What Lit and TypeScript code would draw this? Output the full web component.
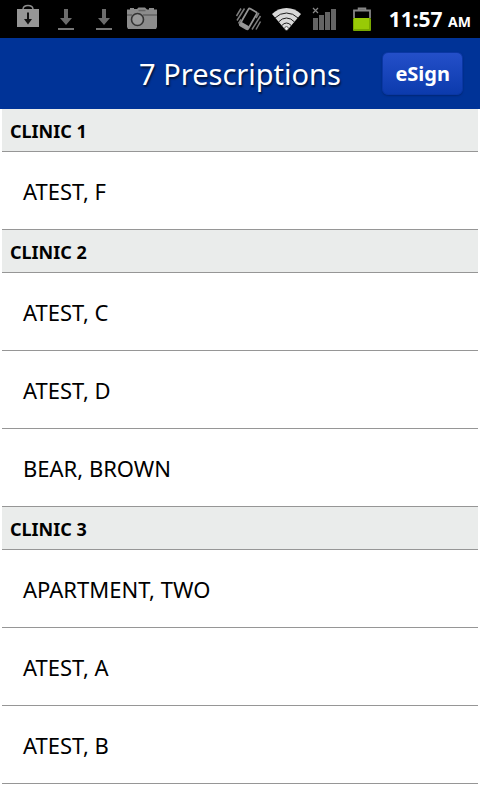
import { LitElement, html, css, svg } from "lit";
import { customElement, property } from "lit/decorators.js";

const bag = svg`
  <path d="M14 10V9Q14.500 5.500 19 5.500T24 9V10" fill="none" stroke="#8c8c8c" stroke-width="1.500"/>
  <rect x="8" y="9" width="22" height="18" fill="#969696"/>
  <path d="M19 12.500V22" stroke="#111" stroke-width="2"/>
  <path d="M15 19H23L19 24.500Z" fill="#111"/>`;

const download = svg`
  <path d="M17 9H21V18H25L19 25L13 18H17Z" fill="#6c6c6c"/>
  <rect x="11" y="28" width="16" height="2" fill="#777"/>`;

const camera = svg`
  <path d="M7 8H11V9H14L15.500 7.500H22L24 9.500H26V8H31V9.500H34V27L33 29H5L4 27V9.500H7Z" fill="#8c8c8c"/>
  <path d="M4 15H9M20 15H34" stroke="#4c4c4c" stroke-width="1"/>
  <circle cx="14.500" cy="19.500" r="6" fill="#999" stroke="#333" stroke-width="1.600"/>
  <path d="M15.500 10.500H22.500" stroke="#666" stroke-width="1.500"/>`;

const vibrate = svg`
  <g fill="none" stroke="#7c7c7c">
    <g transform="rotate(30 19 19)">
      <rect x="14.500" y="9" width="9.500" height="19.500" rx="1.500" stroke="#949494" stroke-width="1.800"/>
      <path d="M15 26.500H23.500" stroke="#999" stroke-width="3.500"/>
    </g>
    <path d="M7.500 16L12 8.500M8 20.500L15.500 8.500M9.500 23.500L12 19.500" stroke-width="1.500"/>
    <path d="M23 29.500L31.500 16M27 29.500L31.500 21.500M27 18L30 13" stroke-width="1.500"/>
  </g>`;

const wifi = svg`
  <path d="M5 14Q11 8 19.500 8T34 14L20.500 30H18.500Z" fill="#d8d8d8"/>
  <g fill="none" stroke="#1c1c1c" stroke-width="1">
    <path d="M8 18Q13 13 19.500 13T31 18"/>
    <path d="M11.500 22Q15 18 19.500 18T27.500 22"/>
    <path d="M14.800 25.500Q17 23 19.500 23T24.200 25.500"/>
  </g>
  <circle cx="19.500" cy="28.500" r="1.900" fill="#f4f4f4" stroke="#111" stroke-width="0.600"/>`;

const signal = svg`
  <path d="M8 8L13 13M13 8L8 13" stroke="#888" stroke-width="1.200"/>
  <path d="M8 18H13V30H8ZM14 15H19V30H14ZM20 12H25V30H20ZM26 9H31V30H26Z" fill="#646464"/>`;

const battery = svg`
  <path d="M11 18V10.500H27V18" fill="none" stroke="#858585" stroke-width="1.800"/>
  <path d="M15.500 10V8.200H22.500V10" fill="#777" stroke="#858585" stroke-width="1.500"/>
  <rect x="10" y="18" width="18" height="13" rx="1" fill="#79a800"/>
  <rect x="11" y="18" width="15" height="11" fill="#98ca06"/>`;

@customElement("status-bar")
export class StatusBar extends LitElement {
  static styles = css`
    :host {
      display: flex;
      align-items: center;
      justify-content: space-between;
      height: 38px;
      padding: 0 9px;
      background: #000;
      color: #fff;
    }
    .group {
      display: flex;
      align-items: center;
    }
    .icon {
      display: block;
      width: 38px;
      height: 38px;
    }
    .clock {
      margin-left: 8px;
      padding-top: 2px;
      font-size: 21px;
      line-height: 36px;
      font-weight: 700;
      white-space: nowrap;
    }
    .period {
      font-size: 14px;
    }
  `;

  private icon(shape: unknown) {
    return html`<svg class="icon" viewBox="0 0 38 38" aria-hidden="true">${shape}</svg>`;
  }

  render() {
    return html`
      <div class="group">${[bag, download, download, camera].map((s) => this.icon(s))}</div>
      <div class="group">
        ${[vibrate, wifi, signal, battery].map((s) => this.icon(s))}
        <time class="clock">11:57 <span class="period">AM</span></time>
      </div>
    `;
  }
}

@customElement("clinic-group")
export class ClinicGroup extends LitElement {
  @property() name = "";
  @property({ attribute: false }) patients: string[] = [];

  static styles = css`
    :host {
      display: block;
    }
    .name {
      margin: 0;
      padding: 2px 8px 0;
      background: #eaeceb;
      border-bottom: 1px solid #969696;
      font-size: 18px;
      line-height: 40px;
      font-weight: 700;
    }
    .list {
      margin: 0;
      padding: 0;
      list-style: none;
    }
    .patient {
      display: block;
      padding: 2px 21px 0;
      border-bottom: 1px solid #969696;
      color: #000;
      font-size: 22px;
      line-height: 75px;
      text-decoration: none;
    }
  `;

  render() {
    return html`
      <h2 class="name">${this.name}</h2>
      <ul class="list">
        ${this.patients.map((p) => html`<li><a class="patient" href="#">${p}</a></li>`)}
      </ul>
    `;
  }
}

@customElement("app-root")
export class AppRoot extends LitElement {
  private groups = [
    { name: "CLINIC 1", patients: ["ATEST, F"] },
    { name: "CLINIC 2", patients: ["ATEST, C", "ATEST, D", "BEAR, BROWN"] },
    { name: "CLINIC 3", patients: ["APARTMENT, TWO", "ATEST, A", "ATEST, B"] },
  ];

  static styles = css`
    :host {
      display: block;
      min-height: 100vh;
      background: #fff;
      color: #000;
      font-family: "Noto Sans", "Open Sans", sans-serif;
    }
    .bar {
      display: grid;
      grid-template-columns: 1fr auto 1fr;
      align-items: center;
      height: 71px;
      padding: 0 17px;
      background: #003397;
    }
    .title {
      grid-column: 2;
      margin: 0;
      color: #fff;
      font-size: 29px;
      line-height: 40px;
      font-weight: 400;
      text-shadow: 1px 2px 2px #001438;
    }
    .sign {
      justify-self: end;
      height: 43px;
      padding: 0 12px;
      border: 1px solid #0a37a4;
      border-radius: 6px;
      background: linear-gradient(#244fc9, #0c3bad);
      box-shadow: 0 1px 2px #002775;
      color: #fff;
      font: 700 20px "Noto Sans", "Open Sans", sans-serif;
    }
    .groups {
      padding: 0 2px;
    }
  `;

  render() {
    return html`
      <status-bar></status-bar>
      <header class="bar">
        <h1 class="title">7 Prescriptions</h1>
        <button class="sign" type="button">eSign</button>
      </header>
      <main class="groups">
        ${this.groups.map(
          (g) => html`<clinic-group .name=${g.name} .patients=${g.patients}></clinic-group>`,
        )}
      </main>
    `;
  }
}
